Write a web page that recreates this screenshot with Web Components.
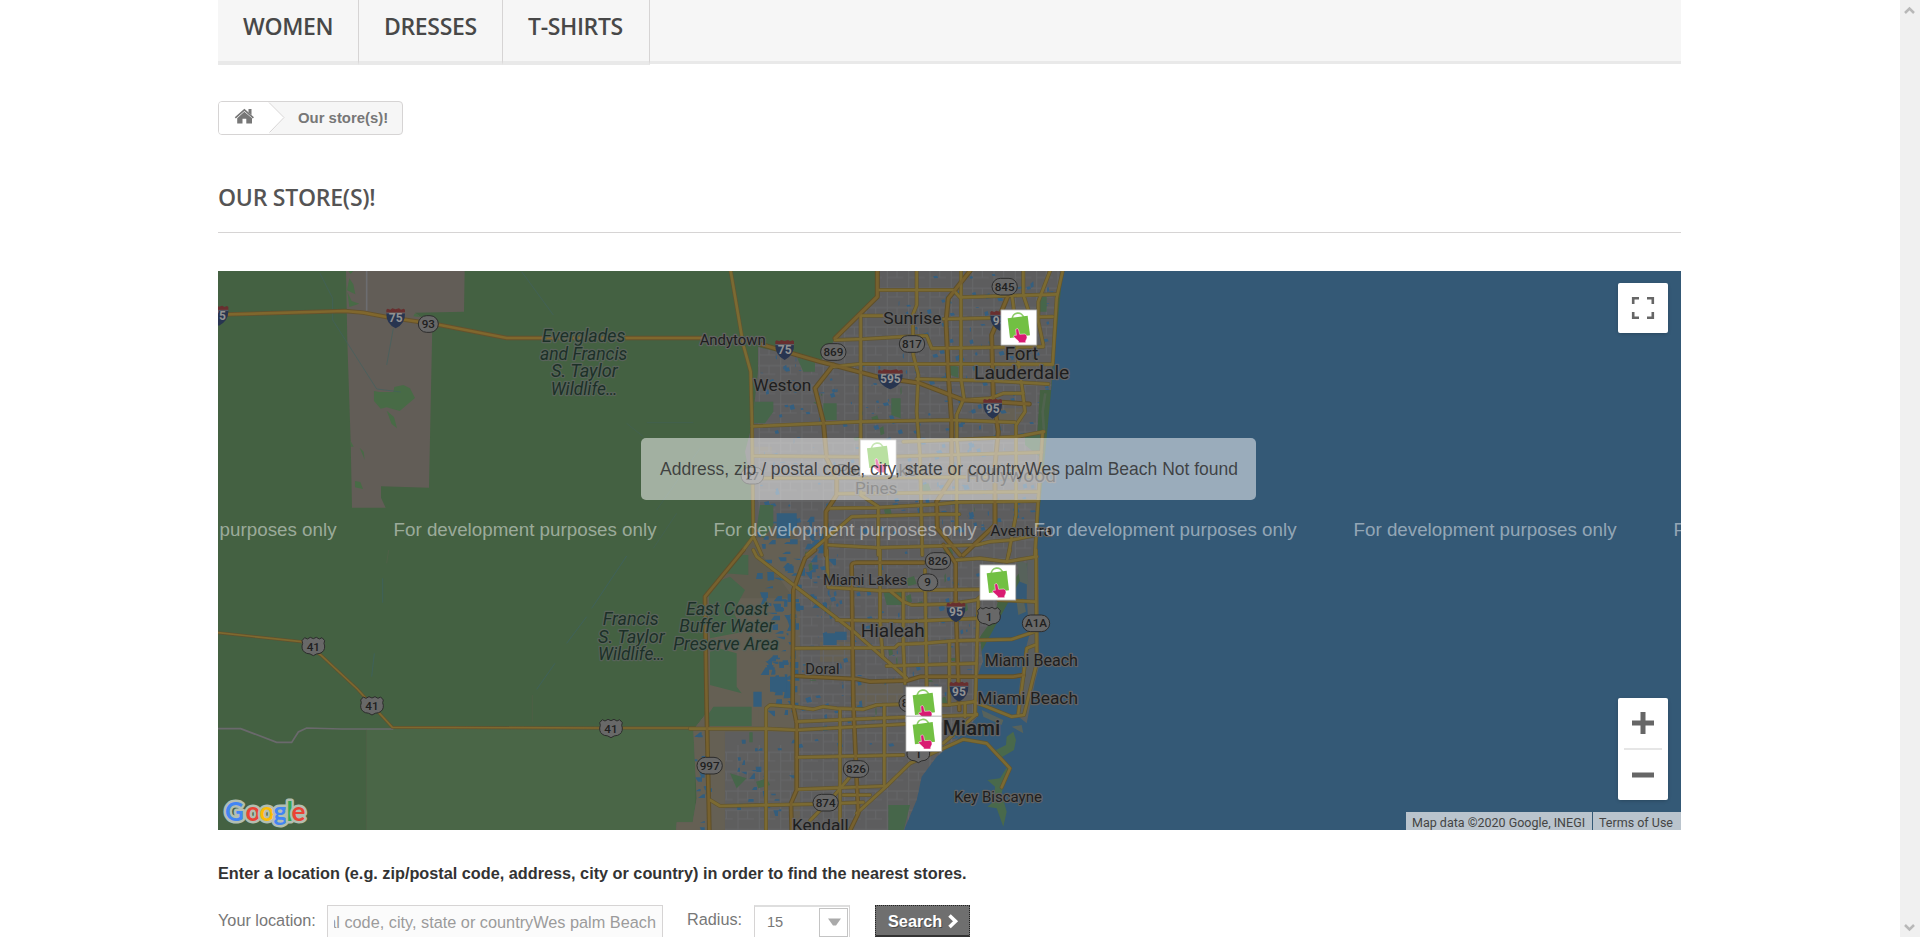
<!DOCTYPE html>
<html lang="en">
<head>
<meta charset="utf-8">
<title>Our store(s)!</title>
<style>
html,body{margin:0;height:100%;overflow:hidden;background:#fff}
body{font-family:"Liberation Sans",Arial,sans-serif;font-size:16.25px;line-height:22.5px;color:#777}
</style>
</head>
<body>
<store-page></store-page>
<script>
const define = (name, html) => {
  const tpl = document.createElement('template');
  tpl.innerHTML = html;
  customElements.define(name, class extends HTMLElement {
    constructor() {
      super();
      this.attachShadow({mode: 'open'}).append(tpl.content.cloneNode(true));
    }
  });
};

define('nav-item', `<style>
:host{display:block;box-sizing:border-box;height:65px;padding:13px 25px 0;border-right:1px solid #d6d4d4;border-bottom:4px solid #e9e9e9;
font:600 23px/27.5px "Open Sans",sans-serif;letter-spacing:-.35px;color:#484848;white-space:nowrap}
</style><slot></slot>`);

define('top-nav', `<style>
:host{display:flex;box-sizing:border-box;height:64px;background:#f6f6f6;border-bottom:3px solid #e9e9e9}
.w{width:141px}.d{width:144px}.t{width:147px}
</style><nav-item class="w">WOMEN</nav-item><nav-item class="d">DRESSES</nav-item><nav-item class="t">T-SHIRTS</nav-item>`);

define('bread-crumb', `<style>
:host{display:flex;box-sizing:border-box;width:185px;height:34px;margin-top:37px;border:1px solid #d6d4d4;border-radius:4px;background:#f6f6f6;overflow:hidden;
font-weight:700;font-size:14.9px;line-height:32px;color:#777}
svg{flex:none;display:block}
span{margin-left:13px;white-space:nowrap}
</style>
<svg width="66" height="32" viewBox="0 0 66 32"><path d="M0 0H50L65.5 15.5L50 32H0z" fill="#fff"/><path d="M50 .5L65 15.500L50.500 30.500" fill="none" stroke="#d6d4d4"/>
<g fill="#777"><path d="M25.300 9.700L33 16.300V21.600H27.300V16.800H23.500V21.600H18.200V16.300z"/><path d="M16.300 15.900L25.400 7.900L34.400 15.900" fill="none" stroke="#777" stroke-width="1.700"/><path d="M29.500 7h3v6l-3-2.600z"/></g></svg>
<span><slot></slot></span>`);

define('page-heading', `<style>
:host{display:block;box-sizing:border-box;height:49px;margin:49px 0 38px;border-bottom:1px solid #d6d4d4;font:600 23px/27.5px "Open Sans",sans-serif;color:#555454;letter-spacing:-.25px;white-space:nowrap}
</style><slot></slot>`);

define('map-button', `<style>
:host{display:flex;flex-direction:column;align-items:center;background:#fff;border-radius:2px;box-shadow:0 1px 4px -1px rgba(0,0,0,.3);width:50px}
</style><slot></slot>`);

define('map-credits', `<style>
:host{display:flex;gap:1px;height:18px;font:12.5px/21px Roboto,sans-serif;color:#444}
span{background:#bac4cd;padding:0 6px;white-space:nowrap;box-sizing:border-box}
.a{width:186px}.b{width:88px}
</style><span class="a">Map data ©2020 Google, INEGI</span><span class="b">Terms of Use</span>`);

/* Road geometry: three map units to a pixel, origin at the north-west of the urban area. */
const wideNorth = ['M840 18L775 100 768 170 775 330 785 470V640L740 710 742 790 810 870','M955 90L905 210 910 400 925 500 915 600V780L820 870','M430 300L375 370 400 470 410 580 440 640V690L408 740V870','M210 237L390 290 430 300 560 335 690 355 820 405 1018 417','M562 18V95L435 220'];
const roadsNorth = ['M122 18L160 240 182 320 186 480 190 815 160 855','M190 815L215 870','M512 150V690L565 725V870','M680 18V120L668 150 670 270 685 330 680 440 690 570 697 870','M813 18V340L822 400 800 450V520L808 600 800 620V790','M960 50L970 120 985 290 998 380 1005 440 978 480V750L955 870','M1000 18V90L1020 150','M1080 18L1045 110V170L1060 240','M1118 18L1100 100 1088 298','M1058 500L1045 700 1035 870','M562 75H790L810 97 1100 88','M512 152H580','M760 162L1088 155','M435 225L520 222 640 215 710 212 725 250 1060 245','M430 305L510 297H800L1085 298','M680 342L900 347 1075 357','M186 484L512 470 778 465 975 472','M640 530L785 525 980 515 1062 500','M188 573L560 576 1055 562','M188 640L1050 635','M440 686L1045 680','M415 730L560 728 740 718 800 712 1045 708','M350 870L485 755 740 748H808','M415 840L560 848 860 840 900 830 965 825 1038 810','M820 405L900 400 940 385H1000'];
const wideSouth = ['M375 0L345 25 310 120 308 460 320 520V720L303 760 305 842','M700 38H500Q483 38 485 50L490 460 500 690 505 790 480 842','M760 -15L797 40V150L808 480','M318 378L500 387 540 395 650 392 690 380H970L1000 375','M160 0L45 140 50 480 58 842'];
const roadsSouth = ['M190 0L200 20 480 235 650 385','M410 0L415 112 570 122 900 118','M570 0V210L578 320','M600 122L640 155 665 165 780 162 860 150 925 90','M640 122V290L645 400','M705 60L710 410','M440 210L660 214 870 205','M318 295L615 293 625 283 700 280 800 272 965 268 1035 245','M590 348L860 340','M228 842V475L240 465 310 470 370 478 400 470 440 475 520 478 560 465 660 462 770 465 855 455','M318 515L600 503 860 495','M0 536H230L320 540 650 522','M320 622L640 615','M322 718L590 708 660 640 820 568 890 580 960 655 935 712','M60 750L90 768 380 762 520 757','M450 480V842','M583 470V705','M480 680L430 740 360 812','M590 708L500 790','M865 150L855 495','M1038 0L1040 340 1002 495 965 500 890 470 850 455','M1000 380L985 490','M1035 285L1010 295 1000 380','M800 30L870 25 950 35 1040 20','M950 35L960 0','M778 280V465','M825 460V500','M925 150L1035 155','M760 580L860 492','M460 735H540'];
const strokes = (list, w, c) => list.map(d => `<path d="${d}" stroke-width="${w}" stroke="${c}"/>`).join('');
const south = s => `<g transform="translate(0 855)">${s}</g>`;
const roads = () => `<g fill="none" stroke-linejoin="round" stroke-linecap="round">` +
  strokes(roadsNorth,12,'#62552f') + south(strokes(roadsSouth,12,'#62552f')) +
  strokes(wideNorth,15,'#5f4f29') + south(strokes(wideSouth,14,'#5f4f29')) +
  strokes(roadsNorth,8,'#7b6a32') + south(strokes(roadsSouth,8,'#7b6a32')) +
  strokes(wideNorth,9,'#77612e') + south(strokes(wideSouth,8,'#77612e')) + `</g>`;

let seed = 7;
const rnd = () => (seed = (seed * 16807) % 2147483647) / 2147483647;
const scatter = (n, x, y, w, h, max, colour) => {
  let d = '';
  for (let i = 0; i < n; i++) {
    const a = x + rnd() * w, b = y + rnd() * h, p = 2 + rnd() * max, q = 2 + rnd() * max;
    d += `M${a | 0} ${b | 0}l${p | 0} ${-(q / 3) | 0} ${p / 3 | 0} ${q | 0} ${-p | 0} ${q / 4 | 0}z`;
  }
  return `<path d="${d}" fill="${colour}"/>`;
};
const blocks = (n, x, y, w, h, max, colour) => {
  let d = '';
  for (let i = 0; i < n; i++) d += `M${x + rnd() * w | 0} ${y + rnd() * h | 0}h${4 + rnd() * max | 0}v${4 + rnd() * max | 0}h${-(4 + rnd() * max) | 0}z`;
  return `<path d="${d}" fill="${colour}"/>`;
};

const label = (t, x, y, len, size = 48, extra = '') => `<text x="${x}" y="${y}" textLength="${len}" lengthAdjust="spacingAndGlyphs" font-size="${size + 2}" ${extra}>${t}</text>`;
const pill = (t, x, y, w = 76) => `<rect x="${x - w / 2}" y="${y - 25}" width="${w}" height="50" rx="25" fill="#686868" stroke="#2c2c2c" stroke-width="3"/><text class="n" x="${x}" y="${y + 12}" text-anchor="middle" font-size="35">${t}</text>`;
const inter = (t, x, y, w = 56) => { const h = w / 2; return `<path d="M${x-h} ${y-16}H${x+h}Q${x+h+2} ${y+16} ${x} ${y+31}Q${x-h-2} ${y+16} ${x-h} ${y-16}z" fill="#283550"/><path d="M${x-h} ${y-16}V${y-25}l4 -3 8 3 6-4 ${h-18} 3 ${h-18} -3 6 4 8-3 4 3V${y-16}z" fill="#682f2f"/><path d="M${x-h} ${y-15}H${x+h}" stroke="#777" stroke-width="2"/><text class="n w" x="${x}" y="${y+13}" text-anchor="middle" font-size="36">${t}</text>`; };
const us = (t, x, y) => `<path d="M${x-26} ${y-27}l8 4 9-5 9 4 9-4 9 5 8-4 8 9q-4 8 0 16q1 16-14 22q-10 0-20 7q-10-7-20-7q-15-6-14-22q4-8 0-16z" fill="#686868" stroke="#2c2c2c" stroke-width="3"/><text class="n" x="${x}" y="${y+13}" text-anchor="middle" font-size="35">${t}</text>`;
const pin = (x, y) => `<g transform="translate(${x} ${y})"><path d="M.500 .500H108.500V106.500H.500z" fill="#fff" stroke="#8c8c8c" stroke-width="2"/><path d="M35 29C33 8 65 1 70 27" fill="none" stroke="#72c043" stroke-width="5" opacity=".8"/><path d="M21 26L81 18 88 77 28 85z" fill="#72c043"/><path d="M45 59q7-6 9 2l3 13 16-1q7 2 6 12l-4 9v5h-21v-4l-15-14q0-7 8-4z" fill="#d91a72" stroke="#fff" stroke-width="1.500"/></g>`;
const tf = 'transform="translate(690 265) scale(.33333)"', tw = 'transform="translate(210 265) scale(.33333)"';

define('store-map', `<style>
:host{display:grid;height:559px;width:1463px;position:relative;overflow:hidden;background:#446142}
svg{display:block}
.map text{font-family:Roboto,sans-serif;fill:#1e1e1e;stroke:#626262;stroke-width:7px;paint-order:stroke;stroke-linejoin:round}
.map text.n{stroke:none;fill:#202020;font-weight:500}.map text.n.w{fill:#929292;font-weight:700}
.map .park text{fill:#1c3028;stroke:#58635a;font-style:italic}
.map .mark text{font-family:"Liberation Sans",Arial,sans-serif;fill:#fff;fill-opacity:.48;stroke:none}
.map .logo text{font-family:Lato,sans-serif;font-weight:700;stroke:#b2beb1;stroke-width:5px}
.note{position:absolute;left:423px;top:167px;width:615px;height:62px;box-sizing:border-box;padding:0 19px;border-radius:5px;background:rgba(255,255,255,.5);display:flex}
.note svg{overflow:visible}
map-button,map-credits{position:absolute}
.full{right:13px;top:12px;height:50px}
.zoom{right:13px;top:427px;height:102px;width:50px}
map-credits{right:0;bottom:0}
</style>
<svg class="map" width="1463" height="559" viewBox="218 271 1463 559">
<defs>
<pattern id="st" width="64" height="58" patternUnits="userSpaceOnUse"><path d="M0 12H64M16 0V58M16 38H64M45 12V38" stroke="#656668" stroke-width="3" fill="none"/></pattern>
<clipPath id="c"><path id="land" d="M562 18H1118L1100 100 1090 250 1083 375H1050L1042 500H1058L1045 700 1037 860 960 960 925 1005 910 1060 870 1115 878 1190 862 1235V1355L800 1425 740 1475 695 1535 680 1605 640 1700H-42L-40 1672H8L20 1600 10 1395 45 1350V995L155 855 192 815V700L165 560 186 480 204 320V246L390 290 440 215 562 95z"/></clipPath>
</defs>
<g ${tw}>
<path d="M408 18H764L762 140L615 143 667 180 657 668 513 664V698L527 728H426L422 530 412 230z" fill="#625d57"/>
<path d="M470 18V137" stroke="#6c6d70" stroke-width="5"/>
<path d="M418 40L430 58 436 88 411 76zM412 80L425 108 448 116 418 126zM415 18H430L422 27zM492 378L508 381H550L553 366 580 360 600 370 615 399 569 438 530 427 512 431 492 408zM530 437L552 456 561 490 545 477zM449 548L461 560 464 584zM435 648L451 651 459 672 435 667zM420 525L431 545 423 545zM615 145L632 156 610 154z" fill="#486b46"/>
<g fill="none" stroke="#41605f" stroke-width="2"><path d="M330 25L368 100V165L500 372 573 381M550 190L530 300M935 20L1030 150"/><path d="M1250 475L1300 515M1470 550L1340 735M1400 745L1330 850M1310 473H1450" opacity=".6"/></g>
<path d="M24 149L405 138 460 143 530 156 690 180 890 219H1490" fill="none" stroke="#65522d" stroke-width="13"/><path d="M24 149L405 138 460 143 530 156 690 180 890 219H1490" fill="none" stroke="#80672d" stroke-width="8"/>
</g>
<g transform="translate(210 550) scale(.33333)">
<path d="M470 537H1455V840H470z" fill="#4a6647"/>
<path d="M24 536H92L200 577H245L265 546 290 534 395 537H550" fill="none" stroke="#6a696c" stroke-width="5"/>
<path d="M518 85V158M493 310L485 380M1250 18L1145 175M1130 200L1070 280M1035 340L980 418" stroke="#3d6065" stroke-width="2" fill="none"/><path d="M536 0L530 40M967 435V515M469 540V840" stroke="#535f49" stroke-width="2" fill="none"/>
<path d="M24 248L275 275 332 315 442 417 512 494 547 532 1165 534H1490" fill="none" stroke="#62502d" stroke-width="9"/><path d="M24 248L275 275 332 315 442 417 512 494 547 532 1165 534H1490" fill="none" stroke="#7e692f" stroke-width="5"/>
</g>
<g ${tf}>
<path d="M1118 18H2990V1700H640L700 1480 1037 860z" fill="#345976"/>
<use href="#land" fill="#5d5d5e"/>
<g clip-path="url(#c)">
<path d="M-50 820H312V1700H-50z" fill="#656054"/>
<path d="M185 780H325L300 1000H60L150 870z" fill="#5f5c4f"/>
<path d="M180 820H330V1700H230V1320L312 1300V1000z" fill="#656054"/>
<path d="M495 1255H640V1325H495zM390 1130H495V1190H390zM920 430H1000V470H920zM190 545H245V570H190zM205 1330H312V1400H205z" fill="#656054"/>
<path d="M105 1400H310V1700H105z" fill="#5e5e5e"/>
<path d="M325 750H1037V1700H325zM204 246H1110V750H204zM562 18H1118V246H440z" fill="url(#st)"/><path d="M105 1440H325V1700H105z" fill="url(#st)"/>
${scatter(260,210,250,860,560,14,'#345f80')}${scatter(60,600,25,480,220,13,'#345f80')}${scatter(130,320,860,550,600,14,'#345f80')}
${blocks(65,200,750,220,280,22,'#335d7c')}${blocks(60,225,1000,85,340,24,'#335d7c')}${blocks(14,10,1400,50,290,20,'#335d7c')}${blocks(24,130,1400,200,290,14,'#335d7c')}
<path d="M260 745H320V790H300V820H260zM400 1105H440V1140H400zM190 1280H215V1325H190zM240 1235H290V1280H240zM435 1100H470V1125H435z" fill="#335d7c"/>
${scatter(34,340,270,740,1100,24,'#466548')}
<path d="M186 410H250V440L225 475H186zM400 415H440V465H400zM604 400H632V460L604 450zM780 300L805 305V338L780 330zM1045 95H1070V140H1045zM210 720H250V780L220 820 200 790zM322 280H375V320H340zM1005 510H1055V580L1005 540z" fill="#46664a"/>
<path d="M0 855H155L45 995V1350L0 1385zM60 1160L85 1150 140 1165V1265L155 1285 60 1260zM70 1325H185V1383H50V1355zM105 870H175V930L105 925zM55 960L120 935 165 975 130 1040 160 1100 60 1120zM90 1370H150V1382H90zM178 1402H188V1432H178zM120 1525L170 1540 140 1570zM198 1550L230 1540 240 1560 205 1570zM595 1620L660 1620 640 1700H595zM580 980L640 975 635 1020 590 1020z" fill="#46664a"/>
</g>
<path d="M1012 870H1045L1048 1200 1035 1250 1010 1375 980 1350 990 1250 1005 1160 1018 1110 1010 1000z" fill="#5b5f5e"/>
<path d="M980 885L1010 895 1015 960 990 950zM980 1010L1000 1000 1008 1040 985 1050zM965 1385L995 1380 1000 1405zM875 1335L940 1365 935 1380 880 1355z" fill="#57625b"/>
<path d="M970 1400L950 1415 948 1440 918 1455 930 1480 972 1455 978 1425zM955 1500L930 1540 892 1545 915 1565 910 1610 892 1625 920 1630 940 1685 950 1640 935 1585z" fill="#49694b"/>
<path d="M1066 385L1058 440 1062 500" stroke="#50634f" stroke-width="8" fill="none"/>
<path d="M10 1395L45 1350V1395z" fill="#625e52"/>
${roads()}
</g>
<g ${tw}>${inter('75',27,151)}${inter('75',557,159)}${pill('93',655,177,60)}
<g class="park">${label('Everglades',996,231,250,51)}${label('and Francis',990,284,262,51)}${label('S. Taylor',1023,336,200,51)}${label('Wildlife…',1022,389,200,51)}
${label('Francis',1178,1080,168,51)}${label('S. Taylor',1164,1133,200,51)}${label('Wildlife…',1164,1185,200,51)}</g>
${us('41',310,1145)}${us('41',486,1323)}${us('41',1203,1391)}
</g>
<g ${tf}>
<g class="park">${label('East Coast',-12,1049,247,51)}${label('Buffer Water',-32,1102,285,51)}${label('Preserve Area',-50,1155,317,51)}</g>
${pill('845',944,65)}${pill('869',430,261)}${pill('817',666,237)}${inter('75',284,254)}${inter('595',601,342,74)}${inter('95',908,430)}${inter('95',929,166)}
${pill('27',187,632,68)}${pill('826',744,888)}${pill('9',713,952,60)}${inter('95',798,1041)}${inter('95',807,1279)}${us('1',897,1055)}${pill('A1A',1038,1075,82)}${pill('997',59,1502)}${pill('826',498,1512)}${pill('874',407,1613)}${pill('836',665,1315)}${us('1',685,1466)}
${label('Sunrise',580,177,175,50)}${label('Andytown',29,239,198,44)}${label('Weston',190,378,174,50)}${label('Fort',944,284,101,54)}${label('Lauderdale',852,342,286,54)}${label('Pembroke',440,633,240,48)}${label('Pines',495,686,127,48)}${label('Hollywood',828,650,270,54)}${label('Aventura',901,814,185,44)}
${label('Miami Lakes',399,959,253,44)}${label('Hialeah',512,1117,192,54)}${label('Doral',346,1228,103,44)}${label('Miami Beach',884,1202,280,46)}${label('Miami Beach',862,1316,302,48)}${label('Miami',758,1411,173,60,'font-weight="500"')}${label('Key Biscayne',792,1611,264,44)}${label('Kendall',306,1697,170,50)}
${pin(932,134)}${pin(510,524)}${pin(869,899)}${pin(647,1265)}${pin(647,1353)}
</g>
<g class="mark">${[73.5,393.5,713.5,1033.5,1353.5,1673.5].map(x => `<text x="${x}" y="536" textLength="263" font-size="18.750">For development purposes only</text>`).join('')}</g>
<g class="logo"><text y="821" font-size="26" x="225"><tspan style="fill:#4285f4">G</tspan><tspan x="245.500" style="fill:#ea4335">o</tspan><tspan x="259.500" style="fill:#fbbc05">o</tspan><tspan x="273.500" style="fill:#4285f4">g</tspan><tspan x="286.500" style="fill:#34a853">l</tspan><tspan x="291.500" style="fill:#ea4335">e</tspan></text></g>
</svg>
<div class="note"><svg width="577" height="62"><text x="0" y="37" textLength="578" lengthAdjust="spacingAndGlyphs" font-family="Liberation Sans" font-size="18" fill="#333" fill-opacity=".88">Address, zip / postal code, city, state or countryWes palm Beach Not found</text></svg></div>
<map-button class="full"><svg width="50" height="50"><path d="M15.200 21V15.200H21M29 15.200H34.800V21M34.800 29V34.800H29M21 34.800H15.200V29" fill="none" stroke="#666" stroke-width="2.600"/></svg></map-button>
<map-button class="zoom"><svg width="50" height="102"><path d="M14 25H36M25 14V36M14 77H36" stroke="#666" stroke-width="5"/><path d="M6 51H44" stroke="#e6e6e6" stroke-width="2"/></svg></map-button>
<map-credits></map-credits>`);

define('search-form', `<style>
:host{display:flex;align-items:flex-start;height:32px;overflow:hidden;margin-top:20px;white-space:nowrap}
label{padding-top:4px}.l1{width:109px}.l2{width:67px;margin-left:24px;padding-top:3px}
.in{box-sizing:border-box;width:336px;height:40px;border:1px solid #d6d4d4;background:#fbfbfb;padding:5px 6px 0 6px;color:#9c9b9b}
.in div{display:flex;justify-content:flex-end;overflow:hidden;font-size:16.3px}
.sel{box-sizing:border-box;display:flex;justify-content:space-between;width:96px;height:40px;border:1px solid #d6d4d4;border-top:2px solid #dedede;padding:1px 1px 0 12px;color:#777}
.sel span{padding-top:3px;font-size:14.6px}
.sel i{box-sizing:border-box;width:29px;height:29px;border:1px solid #c4c4c4;display:block}
.btn{box-sizing:border-box;display:flex;width:95px;height:32px;margin-left:25px;background:#6f6f6f;border:1px dotted #222;border-bottom:2px solid #333;color:#fff;font-weight:700;padding:4px 0 0 12px;text-shadow:1px 1px rgba(0,0,0,.35)}
.btn svg{margin:4px 0 0 5px}
</style>
<label class="l1">Your location:</label><div class="in"><div>al code, city, state or countryWes palm Beach</div></div>
<label class="l2">Radius:</label><div class="sel"><span>15</span><i><svg width="27" height="27" style="display:block"><path d="M8 9.500H21L16 16.500H13z" fill="#aaa"/></svg></i></div>
<div class="btn">Search<svg width="12" height="15"><path d="M2.500 1.500L8.500 7.300L2.500 13" fill="none" stroke="#fff" stroke-width="3.600"/></svg></div>`);

define('page-scrollbar', `<style>
:host{display:flex;flex-direction:column;justify-content:space-between;width:20px;height:937px;background:#f0f0f0;flex:none}
svg{display:block}
</style><svg width="20" height="20"><path d="M5 13L9.500 8.500L14 13" fill="none" stroke="#b8b8b8" stroke-width="2.500"/></svg><svg width="20" height="20"><path d="M5 8L9.500 12.500L14 8" fill="none" stroke="#b8b8b8" stroke-width="2.500"/></svg>`);

define('store-page', `<style>
:host{display:flex;width:1920px;height:937px;overflow:hidden}
main{flex:1;min-width:0;padding:0 219px 0 218px}
p{margin:32px 0 0;font-weight:700;color:#333;white-space:nowrap}
</style>
<main><top-nav></top-nav><bread-crumb>Our store(s)!</bread-crumb><page-heading>OUR STORE(S)!</page-heading><store-map></store-map>
<p>Enter a location (e.g. zip/postal code, address, city or country) in order to find the nearest stores.</p>
<search-form></search-form></main><page-scrollbar></page-scrollbar>`);
</script>
</body>
</html>
